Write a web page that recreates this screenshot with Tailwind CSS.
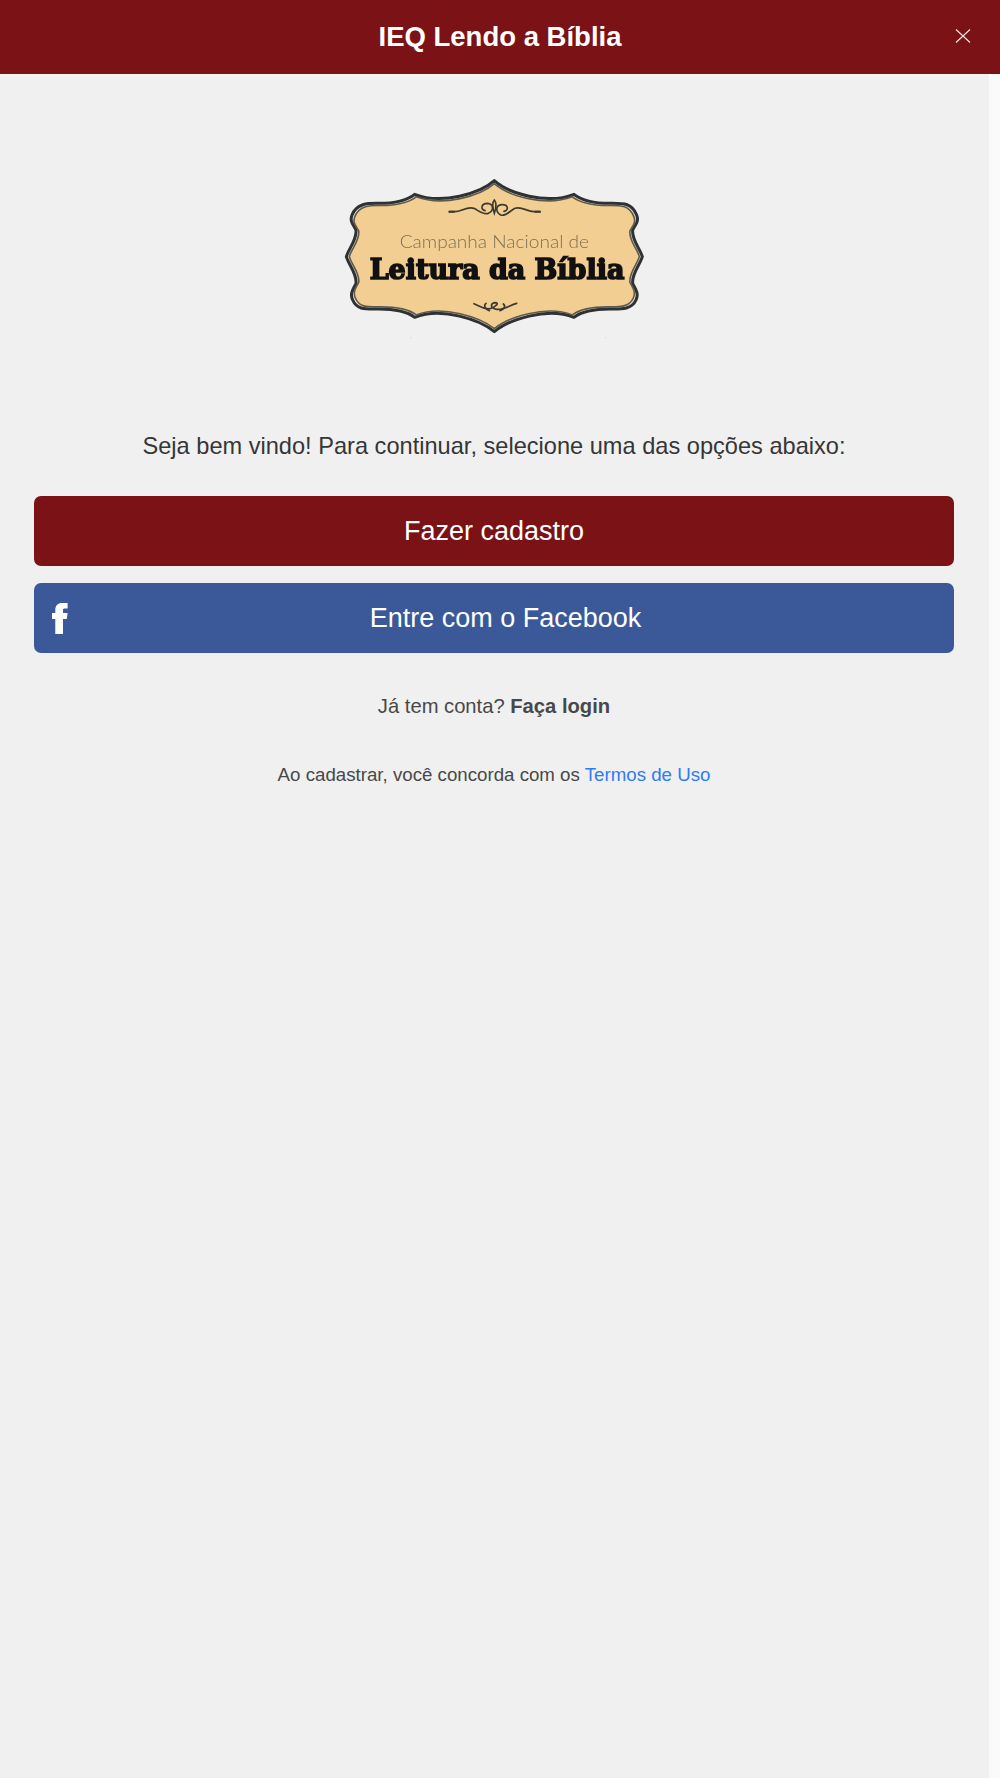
<!DOCTYPE html>
<html lang="pt-BR">
<head>
    <meta charset="UTF-8">
    <meta name="viewport" content="width=device-width, initial-scale=1.0">
    <title>IEQ Lendo a Bíblia</title>
    <script src="https://cdn.jsdelivr.net/npm/@tailwindcss/browser@4"></script>
</head>
<body class="bg-[#f0f0f1] font-['Liberation_Sans',Arial,sans-serif] h-[1778px] overflow-hidden flex flex-col">

    <!-- cabeçalho -->
    <header class="relative h-[74px] shrink-0 bg-[#7a1216] flex items-center justify-center">
        <h1 class="text-white text-[27.5px] font-bold leading-none">IEQ Lendo a Bíblia</h1>
        <button class="absolute left-[955px] top-[28px] w-[16px] h-[16px]">
            <svg viewBox="0 0 16 16" class="w-[16px] h-[16px] block" fill="none" stroke="#f5e9e9" stroke-width="1.1">
                <path d="M1 1.5l14 13M15 1.5l-14 13"/>
            </svg>
        </button>
    </header>

    <div class="flex flex-1">
        <main class="w-[989px] pl-[34px] pr-[35px] flex flex-col">

            <!-- logo -->
            <div class="flex justify-center pt-[86px]">
                <svg viewBox="0 0 1020 570" class="w-[340px] h-[190px] block blur-[0.5px] ml-[-9px]">
                    <path d="M523 62C565 100 680 135 762 103C790 125 830 130 870 130S935 128 950 165C958 185 945 195 938 210C935 240 960 265 967 290C960 315 935 340 938 370C945 385 958 400 948 420C935 450 900 447 870 447S790 450 762 472C680 440 565 480 523 515C481 480 366 440 284 472C256 450 216 447 176 447S111 450 98 420C88 400 101 385 108 370C111 340 86 315 79 290C86 265 111 240 108 210C101 195 88 185 96 165C111 128 146 130 176 130S256 125 284 103C366 135 481 100 523 62Z" fill="#e9dcc0" stroke="#2f3234" stroke-width="9" stroke-linejoin="round"/>
                    <path transform="translate(523 288) scale(0.98 0.96) translate(-523 -288)" d="M523 62C565 100 680 135 762 103C790 125 830 130 870 130S935 128 950 165C958 185 945 195 938 210C935 240 960 265 967 290C960 315 935 340 938 370C945 385 958 400 948 420C935 450 900 447 870 447S790 450 762 472C680 440 565 480 523 515C481 480 366 440 284 472C256 450 216 447 176 447S111 450 98 420C88 400 101 385 108 370C111 340 86 315 79 290C86 265 111 240 108 210C101 195 88 185 96 165C111 128 146 130 176 130S256 125 284 103C366 135 481 100 523 62Z" fill="#f2ce93" stroke="#5f5a50" stroke-width="5" stroke-linejoin="round"/>

                    <!-- ornamento superior -->
                    <g fill="none" stroke="#3d3a34" stroke-width="5" stroke-linecap="round">
                        <path d="M388 155H404C425 155 440 138 462 145C476 152 488 165 505 160C522 152 522 132 502 130C484 130 480 148 495 152"/>
                        <path d="M660 155H642C620 155 606 138 585 145C570 152 558 170 542 165C526 156 526 136 545 134C564 133 568 150 552 154"/>
                        <path d="M523 120C514 130 518 145 523 160C528 145 532 130 523 120Z"/>
                        <path d="M462 431C480 438 492 450 510 446C528 440 540 428 525 428C512 430 508 444 530 448C552 450 568 436 590 430"/>
                        <path d="M498 430C490 436 495 448 508 452M550 432C558 438 553 448 540 452"/>
                    </g>
                    <path d="M386 152h18v6h-18zM644 152h18v6h-18z" fill="#3d3a34"/>

                    <text x="523" y="265" text-anchor="middle" textLength="568" lengthAdjust="spacingAndGlyphs" font-family="Lato, sans-serif" font-weight="300" font-size="52" fill="#7d7050">Campanha Nacional de</text>
                    <text x="531" y="356" text-anchor="middle" textLength="764" lengthAdjust="spacingAndGlyphs" font-family="'DejaVu Serif', serif" font-weight="700" font-size="82" fill="#111" stroke="#111" stroke-width="5">Leitura da Bíblia</text>

                    <circle cx="273" cy="533" r="2" fill="#d5d5d5"/>
                    <circle cx="857" cy="533" r="2" fill="#d5d5d5"/>
                </svg>
            </div>

            <p class="mt-[16px] text-center text-[23.6px] leading-[32px] text-[#363636] pt-[64px]">Seja bem vindo! Para continuar, selecione uma das opções abaixo:</p>

            <!-- botões -->
            <a class="mt-[34px] h-[70px] rounded-[7px] bg-[#7a1216] text-white text-[27px] pt-[1px] flex items-center justify-center">Fazer cadastro</a>
            <a class="mt-[17px] h-[70px] rounded-[7px] bg-[#3b5998] text-white text-[27px] flex items-center pl-[18px] pr-[11px]">
                <svg viewBox="0 0 16 31" class="w-[16px] h-[31px] shrink-0 block">
                    <path d="M3.3 31V16H0v-6h3.3V7C3.3 2.5 6 0 10 0h5.6v5.6h-3c-1.2 0-1.6.6-1.6 1.8V10h4.6l-.8 6H11v15z" fill="#fff"/>
                </svg>
                <span class="flex-1 text-center">Entre com o Facebook</span>
            </a>

            <p class="mt-[36px] text-center text-[20.2px] leading-[34px] text-[#484848]">Já tem conta? <b>Faça login</b></p>
            <p class="mt-[38px] text-center text-[18.7px] leading-[28px] text-[#484848]">Ao cadastrar, você concorda com os <a class="text-[#2f7bf5]">Termos de Uso</a></p>
        </main>
        <!-- faixa da barra de rolagem -->
        <div class="w-[11px] bg-[#fafafa]"></div>
    </div>
</body>
</html>
